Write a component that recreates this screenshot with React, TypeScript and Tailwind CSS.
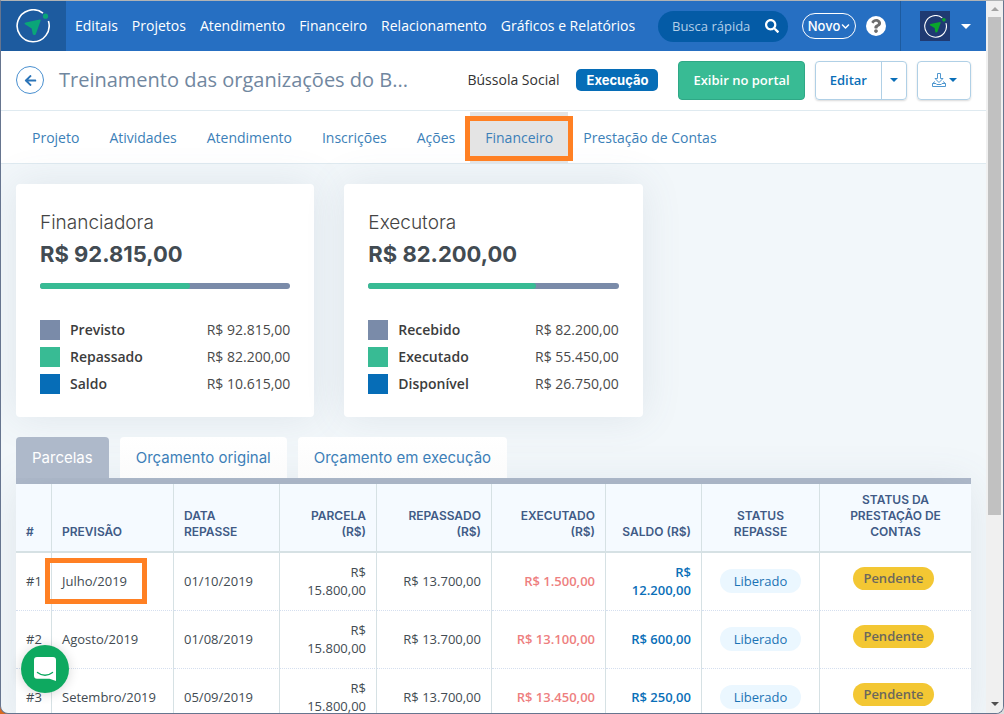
import type { ReactNode } from "react";
import { FaArrowLeft, FaChevronDown, FaQuestion, FaSearch } from "react-icons/fa";

type SummaryItem = {
  label: string;
  value: string;
  color: string;
};

type Installment = {
  id: string;
  forecast: string;
  date: string;
  amount: string;
  transferred: string;
  executed: string;
  balance: string;
  highlighted?: boolean;
};

const menu = ["Editais", "Projetos", "Atendimento", "Financeiro", "Relacionamento", "Gráficos e Relatórios"];

const projectTabs = [
  "Projeto",
  "Atividades",
  "Atendimento",
  "Inscrições",
  "Ações",
  "Financeiro",
  "Prestação de Contas",
];

const budgetTabs = ["Parcelas", "Orçamento original", "Orçamento em execução"];

const funder: SummaryItem[] = [
  { label: "Previsto", value: "R$ 92.815,00", color: "bg-[#7a8ba9]" },
  { label: "Repassado", value: "R$ 82.200,00", color: "bg-[#38bb94]" },
  { label: "Saldo", value: "R$ 10.615,00", color: "bg-[#066db7]" },
];

const executor: SummaryItem[] = [
  { label: "Recebido", value: "R$ 82.200,00", color: "bg-[#7a8ba9]" },
  { label: "Executado", value: "R$ 55.450,00", color: "bg-[#38bb94]" },
  { label: "Disponível", value: "R$ 26.750,00", color: "bg-[#066db7]" },
];

const installments: Installment[] = [
  {
    id: "#1",
    forecast: "Julho/2019",
    date: "01/10/2019",
    amount: "R$ 15.800,00",
    transferred: "R$ 13.700,00",
    executed: "R$ 1.500,00",
    balance: "R$ 12.200,00",
    highlighted: true,
  },
  {
    id: "#2",
    forecast: "Agosto/2019",
    date: "01/08/2019",
    amount: "R$ 15.800,00",
    transferred: "R$ 13.700,00",
    executed: "R$ 13.100,00",
    balance: "R$ 600,00",
  },
  {
    id: "#3",
    forecast: "Setembro/2019",
    date: "05/09/2019",
    amount: "R$ 15.800,00",
    transferred: "R$ 13.700,00",
    executed: "R$ 13.450,00",
    balance: "R$ 250,00",
  },
];

export default function App() {
  return (
    <div className="h-screen bg-[linear-gradient(to_right,#d9691f_50%,#dcdcdc_50%)] font-['Open_Sans',sans-serif] text-sm text-[#333]">
      <div className="flex h-full overflow-hidden rounded-b-lg border border-[#66758f] border-t-[#b0b3b5] bg-[#f2f7fa]">
        <div className="relative flex min-w-0 flex-1 flex-col overflow-hidden">
          <TopBar />
          <ProjectHeader />
          <ProjectTabs />
          <main className="px-[15px] pt-5">
            <section className="grid grid-cols-3 gap-[30px]">
              <SummaryCard title="Financiadora" total="R$ 92.815,00" percent={60} items={funder} />
              <SummaryCard title="Executora" total="R$ 82.200,00" percent={67} items={executor} />
            </section>
            <BudgetTabs />
            <InstallmentTable />
          </main>
          <button
            aria-label="Abrir chat"
            className="absolute bottom-5 left-5 flex size-12 items-center justify-center rounded-full bg-[#0ea960] shadow-[0_1px_12px_rgba(0,0,0,0.16)]"
            type="button"
          >
            <ChatIcon />
          </button>
        </div>
        <Scrollbar />
      </div>
    </div>
  );
}

function TopBar() {
  return (
    <header className="flex h-[50px] shrink-0 items-center bg-[#266fc2] text-white">
      <a
        aria-label="Início"
        className="flex h-full w-[65px] shrink-0 items-center bg-[#1d5b9f] pl-[15px]"
        href="#inicio"
      >
        <CompassLogo className="size-[34px]" color="#0aa678" />
      </a>
      <nav className="flex gap-[14px] pl-[9px] whitespace-nowrap">
        {menu.map((item) => (
          <a href="#menu" key={item}>
            {item}
          </a>
        ))}
      </nav>
      <div className="ml-auto flex h-full items-center">
        <label className="flex h-[31px] w-[130px] items-center rounded-full bg-[#045ba6] pr-[9px] pl-[14px]">
          <input
            aria-label="Busca rápida"
            className="w-full min-w-0 text-[13px] placeholder:text-[#b4cfe8] focus:outline-none"
            placeholder="Busca rápida"
            type="search"
          />
          <FaSearch className="shrink-0" size={14} aria-hidden />
        </label>
        <button
          className="ml-[14px] flex h-[26px] w-[54px] items-center justify-center gap-px rounded-full border border-white font-['Inter',sans-serif] text-[13px] font-medium"
          type="button"
        >
          Novo
          <FaChevronDown size={9} aria-hidden />
        </button>
        <button
          aria-label="Ajuda"
          className="ml-[10px] flex size-5 items-center justify-center rounded-full bg-white text-[#6d6d6d]"
          type="button"
        >
          <FaQuestion size={14} aria-hidden />
        </button>
        <button
          aria-label="Conta"
          className="ml-[14px] flex h-full items-center gap-[11px] border-l border-[#1d5b9f] pr-[15px] pl-[19px]"
          type="button"
        >
          <span className="flex size-[30px] items-center justify-center bg-[#1f3a72]">
            <CompassLogo className="size-[23px]" color="#0aa52c" />
          </span>
          <Caret className="w-[10px]" />
        </button>
      </div>
    </header>
  );
}

function ProjectHeader() {
  return (
    <div className="flex h-[60px] shrink-0 items-center border-b border-[#dfeaf0] bg-white px-[15px] pb-px whitespace-nowrap">
      <a
        aria-label="Voltar"
        className="flex size-7 items-center justify-center rounded-full border border-[#4a90d0] text-[#2b74b8]"
        href="#voltar"
      >
        <FaArrowLeft size={13} aria-hidden />
      </a>
      <h1 className="ml-[15px] text-xl text-[#7187a0]">Treinamento das organizações do B...</h1>
      <div className="ml-auto flex items-center">
        <span>Bússola Social</span>
        <span className="ml-[17px] rounded-[5px] bg-[#066db7] px-[10px] font-['Inter',sans-serif] text-[13px] leading-[22px] font-bold text-white">
          Execução
        </span>
        <button
          className="ml-5 h-[39px] rounded-[4px] border border-[#2fa886] bg-[#38bb94] px-[14px] text-[13px] font-semibold text-white"
          type="button"
        >
          Exibir no portal
        </button>
        <div className="ml-[10px] flex h-[39px] rounded-[4px] border border-[#b0d0e6] text-[#0a6fb8] shadow-[0_1px_2px_rgba(0,0,0,0.15)]">
          <button className="px-[14px] text-[13px] font-semibold" type="button">
            Editar
          </button>
          <button aria-label="Mais opções" className="border-l border-[#b0d0e6] px-2" type="button">
            <Caret className="w-2" />
          </button>
        </div>
        <button
          aria-label="Baixar"
          className="ml-[10px] flex h-[39px] w-[54px] items-center justify-center gap-[3px] rounded-[4px] border border-[#b0d0e6] text-[#0a6fb8] shadow-[0_1px_2px_rgba(0,0,0,0.15)]"
          type="button"
        >
          <DownloadIcon />
          <Caret className="w-2" />
        </button>
      </div>
    </div>
  );
}

function ProjectTabs() {
  return (
    <nav className="flex h-[53px] shrink-0 border-b border-[#dfeaf0] bg-white px-4 pt-px text-[#3c7fb8]">
      {projectTabs.map((tab) => {
        const active = tab === "Financeiro";

        return (
          <a
            aria-current={active ? "page" : undefined}
            className={`relative flex items-center px-[15px] whitespace-nowrap ${active ? "bg-[#e4e4e4]" : ""}`}
            href="#aba"
            key={tab}
          >
            {tab}
            {active ? (
              <span className="absolute -inset-x-[5px] top-1 bottom-[2px] border-[5px] border-[#ff8023]" />
            ) : null}
          </a>
        );
      })}
    </nav>
  );
}

function SummaryCard({
  title,
  total,
  percent,
  items,
}: {
  title: string;
  total: string;
  percent: number;
  items: SummaryItem[];
}) {
  return (
    <article className="rounded-[4px] bg-white px-6 pt-[27px] pb-5 shadow-[0_0_40px_rgba(90,110,130,0.12)]">
      <h2 className="font-['Inter',sans-serif] text-[19px] leading-6 font-light text-[#444]">{title}</h2>
      <p className="mt-[3px] font-['Inter',sans-serif] text-[22px] leading-8 font-bold text-[#424b52]">{total}</p>
      <div className="mt-[13px] h-[6px] overflow-hidden rounded-full bg-[#7a8ba9]">
        <div className="h-full rounded-r-full bg-[#38bb94]" style={{ width: `${percent}%` }} />
      </div>
      <dl className="mt-[27px]">
        {items.map((item) => (
          <div className="flex h-[27px] items-center" key={item.label}>
            <dt className="flex items-center gap-[10px] font-semibold text-[#3c3c3c]">
              <span className={`size-5 ${item.color}`} />
              {item.label}
            </dt>
            <dd className="ml-auto text-[#4a4a4a]">{item.value}</dd>
          </div>
        ))}
      </dl>
    </article>
  );
}

function BudgetTabs() {
  return (
    <div
      className="mt-5 flex gap-[11px] border-b-[6px] border-[#aeb9ca] font-['Inter',sans-serif] text-[15px]"
      role="tablist"
    >
      {budgetTabs.map((tab, index) => (
        <button
          aria-selected={index === 0}
          className={`h-[41px] rounded-t-[4px] px-4 ${
            index === 0 ? "bg-[#aeb9ca] text-white" : "bg-linear-to-b from-white to-[#fbfbfb] text-[#3c7fb8]"
          }`}
          key={tab}
          role="tab"
          type="button"
        >
          {tab}
        </button>
      ))}
    </div>
  );
}

function InstallmentTable() {
  return (
    <table className="w-full table-fixed border-separate border-spacing-0 bg-white text-[13px] leading-[18px] font-medium text-[#424b52] shadow-[0_0_40px_rgba(90,110,130,0.12)]">
      <colgroup>
        <col className="w-[36px]" />
        <col className="w-[122px]" />
        <col className="w-[106px]" />
        <col className="w-[97px]" />
        <col className="w-[115px]" />
        <col className="w-[114px]" />
        <col className="w-[96px]" />
        <col className="w-[118px]" />
        <col />
      </colgroup>
      <thead>
        <tr className="h-[69px] bg-[#f5faff]">
          <HeaderCell>#</HeaderCell>
          <HeaderCell>Previsão</HeaderCell>
          <HeaderCell>
            Data
            <br />
            repasse
          </HeaderCell>
          <HeaderCell align="text-right">
            Parcela
            <br />
            (R$)
          </HeaderCell>
          <HeaderCell align="text-right">
            Repassado
            <br />
            (R$)
          </HeaderCell>
          <HeaderCell align="text-right">
            Executado
            <br />
            (R$)
          </HeaderCell>
          <HeaderCell align="text-right">Saldo (R$)</HeaderCell>
          <HeaderCell align="text-center">
            Status
            <br />
            repasse
          </HeaderCell>
          <HeaderCell align="text-center">
            Status da
            <br />
            prestação de
            <br />
            contas
          </HeaderCell>
        </tr>
      </thead>
      <tbody>
        {installments.map((row) => (
          <tr className="h-[58px]" key={row.id}>
            <Cell>{row.id}</Cell>
            <Cell>
              {row.forecast}
              {row.highlighted ? (
                <span className="absolute top-[5px] -left-[7px] h-[46px] w-[102px] border-[5px] border-[#ff8023]" />
              ) : null}
            </Cell>
            <Cell>{row.date}</Cell>
            <Cell className="text-right">{row.amount}</Cell>
            <Cell className="text-right">{row.transferred}</Cell>
            <Cell className="text-right font-semibold text-[#ee7f7f]">{row.executed}</Cell>
            <Cell className="text-right font-semibold text-[#0a6fb8]">{row.balance}</Cell>
            <Cell className="text-center">
              <span className="inline-block rounded-full bg-[#ebf7ff] px-[14px] leading-6 font-normal text-[#1b73b5]">
                Liberado
              </span>
            </Cell>
            <Cell className="text-center">
              <span className="mr-1 mb-1 inline-block rounded-full bg-[#f3c733] px-[10px] leading-[23px] font-semibold text-[#6b675c]">
                Pendente
              </span>
            </Cell>
          </tr>
        ))}
      </tbody>
    </table>
  );
}

function HeaderCell({ align = "text-left", children }: { align?: string; children: ReactNode }) {
  return (
    <th
      className={`border-r border-b-2 border-[#d6e1e4] px-[10px] pb-[11px] align-bottom font-['Inter',sans-serif] text-xs leading-4 font-semibold text-[#405a86] uppercase last:border-r-0 ${align}`}
      scope="col"
    >
      {children}
    </th>
  );
}

function Cell({ className = "", children }: { className?: string; children: ReactNode }) {
  return (
    <td
      className={`relative border-r border-b border-r-[#d6e1e4] border-b-[#d5dfef] px-[10px] pb-[2px] [border-bottom-style:dotted] last:border-r-0 ${className}`}
    >
      {children}
    </td>
  );
}

function Scrollbar() {
  return (
    <div aria-hidden className="flex w-[17px] shrink-0 flex-col items-center bg-[#f0f0f0]">
      <Caret className="my-[6px] w-2 rotate-180 text-[#a3a3a3]" />
      <div className="h-[498px] w-[13px] bg-[#c1c1c1]" />
      <Caret className="mt-auto mb-[7px] w-2 text-[#505050]" />
    </div>
  );
}

function Caret({ className }: { className: string }) {
  return (
    <svg aria-hidden className={className} fill="currentColor" viewBox="0 0 10 5">
      <path d="M0 0h10L5 5z" />
    </svg>
  );
}

function CompassLogo({ className, color }: { className: string; color: string }) {
  return (
    <svg aria-hidden className={className} fill="none" viewBox="0 0 34 34">
      <path d="M27 4.2A16 16 0 1 0 32.4 12" stroke="#fff" strokeWidth="1.6" />
      <circle cx="29.5" cy="7.2" fill={color} r="2.6" />
      <path
        d="M8.500 14.600c0-.7.5-1.100 1.200-1.200l14-3c.8-.1 1.200.3 1 1l-4.800 13.500c-.5 1.300-2.700 1.500-3.200.2l-1-5.700-6.300-3.800c-.6-.3-.9-.6-.9-1z"
        fill={color}
      />
    </svg>
  );
}

function DownloadIcon() {
  return (
    <svg aria-hidden className="size-[14px]" fill="none" stroke="#4f97cf" viewBox="0 0 14 14">
      <path d="M5.500.500h3v5h2.500L7 9.500 3 5.500h2.500z" />
      <path d="M3 8.500 .500 10.500v3h13v-3L11 8.500M.500 10.500h3.500l.800 1h4.400l.800-1h3.500" />
    </svg>
  );
}

function ChatIcon() {
  return (
    <svg aria-hidden className="h-6 w-[22px]" viewBox="0 0 22 24">
      <path d="M3 0h16a3 3 0 0 1 3 3v21l-6.500-2.300H3a3 3 0 0 1-3-3V3a3 3 0 0 1 3-3z" fill="#fff" />
      <path
        d="M3.500 15.500c4.500 3.600 10.500 3.600 15 0"
        fill="none"
        stroke="#0ea960"
        strokeLinecap="round"
        strokeWidth="1.4"
      />
    </svg>
  );
}
